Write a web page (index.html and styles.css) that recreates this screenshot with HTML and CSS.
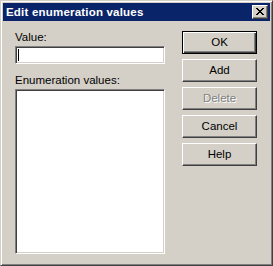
FILE: index.html
```html
<!DOCTYPE html>
<html>
<head>
<meta charset="utf-8">
<link rel="stylesheet" href="styles.css">
</head>
<body>
<div class="window">
  <div class="titlebar">
    <span class="title">Edit enumeration values</span>
    <span class="close"><svg width="8" height="7" viewBox="0 0 8 7"><path d="M0 0h2v1h-2zM6 0h2v1h-2zM1 1h2v1h-2zM5 1h2v1h-2zM2 2h4v1h-4zM3 3h2v1h-2zM2 4h4v1h-4zM1 5h2v1h-2zM5 5h2v1h-2zM0 6h2v1h-2zM6 6h2v1h-2z" fill="#000"/></svg></span>
  </div>
  <div class="content">
    <div class="left">
      <div class="label">Value:</div>
      <div class="input"><span class="caret"></span></div>
      <div class="label label2">Enumeration values:</div>
      <div class="listbox"></div>
    </div>
    <div class="buttons">
      <div class="btn default"><span>OK</span></div>
      <div class="btn"><span>Add</span></div>
      <div class="btn disabled"><span>Delete</span></div>
      <div class="btn"><span>Cancel</span></div>
      <div class="btn"><span>Help</span></div>
    </div>
  </div>
</div>
</body>
</html>
```
FILE: styles.css
```css
html, body {
  margin: 0;
  padding: 0;
  background: #D4D0C8;
}
.window {
  box-sizing: border-box;
  width: 273px;
  height: 266px;
  background: #D4D0C8;
  border: 1px solid;
  border-color: #D4D0C8 #404040 #404040 #D4D0C8;
  box-shadow: inset 1px 1px #fff, inset -1px -1px #808080;
  padding: 2px;
  font-family: "Liberation Sans", Arial, sans-serif;
  font-size: 11px;
  color: #000;
  display: flex;
  flex-direction: column;
}
.titlebar {
  height: 18px;
  background: #0A246A;
  display: flex;
  align-items: center;
  justify-content: space-between;
  padding: 0 2px 0 3px;
}
.title {
  color: #fff;
  font-weight: bold;
  font-size: 11.5px;
  letter-spacing: 0.2px;
}
.close {
  box-sizing: border-box;
  width: 16px;
  height: 14px;
  background: #D4D0C8;
  border: 1px solid;
  border-color: #fff #404040 #404040 #fff;
  box-shadow: inset -1px -1px #808080;
  display: flex;
  align-items: center;
  justify-content: center;
  padding: 0 1px 1px 0;
}
.close svg { display: block; }
.content {
  display: flex;
  padding: 9px 0 0 12px;
}
.left {
  width: 150px;
  display: flex;
  flex-direction: column;
}
.label {
  height: 14px;
  line-height: 14px;
  margin-bottom: 2px;
  font-size: 11.5px;
}
.label2 {
  margin-top: 9px;
}
.input, .listbox {
  box-sizing: border-box;
  background: #fff;
  border: 1px solid;
  border-color: #808080 #fff #fff #808080;
  box-shadow: inset 1px 1px #404040, inset -1px -1px #D4D0C8;
}
.input {
  height: 18px;
  position: relative;
}
.caret {
  position: absolute;
  left: 2px;
  top: 2px;
  width: 1px;
  height: 12px;
  background: #000;
}
.listbox {
  height: 165px;
}
.buttons {
  margin-left: 17px;
  display: flex;
  flex-direction: column;
  gap: 5px;
  padding-top: 1px;
}
.btn {
  box-sizing: border-box;
  width: 75px;
  height: 23px;
  border: 1px solid;
  border-color: #fff #404040 #404040 #fff;
  box-shadow: inset -1px -1px #808080;
  display: flex;
  align-items: center;
  justify-content: center;
  line-height: 13px;
  font-size: 11.5px;
}
.btn span { padding-bottom: 1px; }
.btn.default {
  border: 1px solid #000;
  box-shadow: inset 1px 1px #fff, inset -1px -1px #404040, inset -2px -2px #808080;
}
.btn.disabled {
  color: #808080;
  text-shadow: 1px 1px #fff;
}
```
